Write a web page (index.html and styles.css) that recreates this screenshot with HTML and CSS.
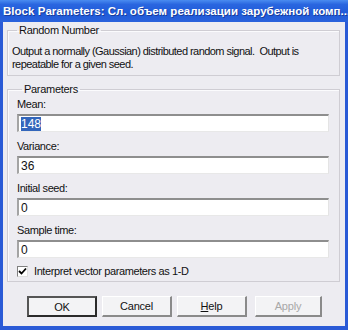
FILE: index.html
```html
<!DOCTYPE html>
<html>
<head>
<meta charset="utf-8">
<link rel="stylesheet" href="styles.css">
</head>
<body>
<div class="window">
  <div class="titlebar">
    <span class="title">Block Parameters: Сл. объем реализации зарубежной комп...</span>
    <span class="close"><svg width="9" height="9" viewBox="0 0 9 9"><path d="M1 1L8 8M8 1L1 8" stroke="#fff" stroke-width="2" stroke-linecap="square"/></svg></span>
  </div>
  <div class="client">
    <fieldset class="group desc-group">
      <legend>Random Number</legend>
      <p class="desc">Output a normally (Gaussian) distributed random signal.&nbsp; Output is repeatable for a given seed.</p>
    </fieldset>
    <fieldset class="group params">
      <legend>Parameters</legend>
      <div class="field">
        <div class="label">Mean:</div>
        <div class="input"><span class="sel">148</span></div>
      </div>
      <div class="field">
        <div class="label">Variance:</div>
        <div class="input">36</div>
      </div>
      <div class="field">
        <div class="label">Initial seed:</div>
        <div class="input">0</div>
      </div>
      <div class="field">
        <div class="label">Sample time:</div>
        <div class="input">0</div>
      </div>
      <div class="check-row">
        <span class="checkbox"><svg width="9" height="9" viewBox="0 0 9 9"><path d="M1 4L3.5 6.5L8 1.5" stroke="#000" stroke-width="1.8" fill="none"/></svg></span>
        <span>Interpret vector parameters as 1-D</span>
      </div>
    </fieldset>
    <div class="buttons">
      <div class="btn default">OK</div>
      <div class="btn">Cancel</div>
      <div class="btn"><u>H</u>elp</div>
      <div class="btn disabled">Apply</div>
    </div>
  </div>
</div>
</body>
</html>
```
FILE: styles.css
```css
html, body {
  margin: 0;
  padding: 0;
  background: #ffffff;
}
.window {
  width: 348px;
  height: 330px;
  box-sizing: border-box;
  display: flex;
  flex-direction: column;
  background: #2a5ad6;
  padding: 0 3px 4px 3px;
  font-family: "Liberation Sans", Arial, sans-serif;
  font-size: 11px;
  color: #111;
}
.titlebar {
  height: 22px;
  margin: 0 -3px;
  padding: 0 4px 0 3px;
  display: flex;
  align-items: center;
  justify-content: space-between;
  background: linear-gradient(to bottom, #4a8cf0 0%, #2a66e0 20%, #1f5ad8 60%, #2a62dc 100%);
}
.title {
  flex-shrink: 0;
  color: #fff;
  font-weight: bold;
  font-size: 11.5px;
  letter-spacing: 0.03px;
  white-space: nowrap;
  text-shadow: 1px 1px 0 #1a3c9a;
}
.close {
  flex-shrink: 0;
  width: 15px;
  height: 13px;
  display: flex;
  align-items: center;
  justify-content: center;
  background: #5a8ef0;
  border: 1px solid #c8d8f8;
  border-radius: 2px;
  box-sizing: border-box;
}
.client {
  flex: 1;
  background: #edecf1;
  display: flex;
  flex-direction: column;
  padding: 1px 5px 0 4px;
}
.group {
  margin: 0;
  border: 1px solid #cfcdd3;
  box-shadow: inset 1px 1px 0 #fbfbfd;
  padding: 0 4px 0 4px;
  min-width: 0;
}
.group legend {
  padding: 0 2px;
  margin-left: 5px;
  line-height: 14px;
  letter-spacing: -0.3px;
}
.desc-group {
  padding-top: 8px;
  padding-bottom: 4px;
}
.desc {
  margin: 0;
  line-height: 13px;
  letter-spacing: -0.55px;
  word-spacing: 0;
}
.params {
  margin-top: 6px;
  padding: 1px 10px 4px 9px;
}
.field {
  display: flex;
  flex-direction: column;
  gap: 3px;
  margin-bottom: 7px;
}
.label {
  line-height: 14px;
  letter-spacing: -0.4px;
}
.input {
  height: 18px;
  box-sizing: border-box;
  background: #fff;
  border-top: 2px solid #8e8e8e;
  border-left: 2px solid #a4a4a4;
  border-right: 1px solid #e4e4e4;
  border-bottom: 1px solid #e8e8e8;
  padding: 1px 2px;
  line-height: 14px;
  font-size: 12px;
}
.sel {
  background: #3366bb;
  color: #fff;
}
.check-row {
  display: flex;
  align-items: center;
  gap: 6px;
  margin-top: 2px;
  letter-spacing: -0.4px;
}
.checkbox {
  width: 11px;
  height: 11px;
  box-sizing: border-box;
  background: #fff;
  border-top: 1px solid #808080;
  border-left: 1px solid #808080;
  border-right: 1px solid #e0e0e0;
  border-bottom: 1px solid #e0e0e0;
  display: flex;
  align-items: center;
  justify-content: center;
}
.buttons {
  display: flex;
  gap: 5px;
  margin-top: 14px;
  padding-left: 20px;
}
.btn {
  width: 70px;
  height: 21px;
  box-sizing: border-box;
  display: flex;
  align-items: center;
  justify-content: center;
  background: #f3f3f5;
  border-top: 1px solid #ffffff;
  border-left: 1px solid #ffffff;
  border-right: 2px solid #8a8a8a;
  border-bottom: 2px solid #8a8a8a;
  letter-spacing: -0.2px;
}
.btn.default {
  border: 2px solid #2a2a2a;
  border-top-color: #555;
  border-left-color: #555;
}
.btn.disabled {
  color: #a8a8a8;
  margin-left: 3px;
  width: 67px;
}
```
